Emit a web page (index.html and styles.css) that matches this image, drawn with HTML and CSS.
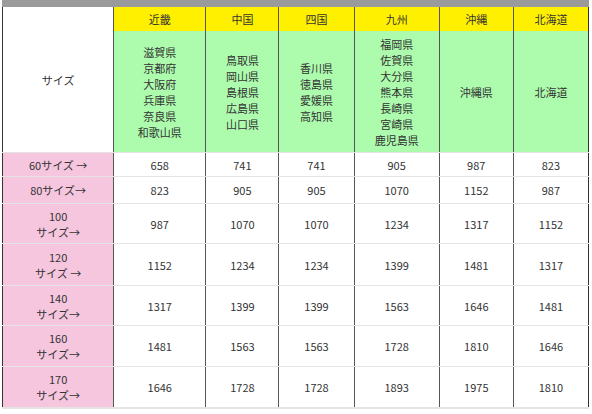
FILE: index.html
```html
<!DOCTYPE html>
<html lang="ja">
<head>
<meta charset="utf-8">
<link rel="stylesheet" href="styles.css">
</head>
<body>
<div class="wrap">
  <div class="topbar"></div>
  <table class="rates">
    <colgroup>
      <col class="c1"><col class="c2"><col class="c3"><col class="c4"><col class="c5"><col class="c6"><col class="c7">
    </colgroup>
    <tr class="head">
      <td class="size-head" rowspan="2">サイズ</td>
      <td class="area">近畿</td>
      <td class="area">中国</td>
      <td class="area">四国</td>
      <td class="area">九州</td>
      <td class="area">沖縄</td>
      <td class="area">北海道</td>
    </tr>
    <tr class="prefs">
      <td class="pref">滋賀県<br>京都府<br>大阪府<br>兵庫県<br>奈良県<br>和歌山県</td>
      <td class="pref">鳥取県<br>岡山県<br>島根県<br>広島県<br>山口県</td>
      <td class="pref">香川県<br>徳島県<br>愛媛県<br>高知県</td>
      <td class="pref">福岡県<br>佐賀県<br>大分県<br>熊本県<br>長崎県<br>宮崎県<br>鹿児島県</td>
      <td class="pref">沖縄県</td>
      <td class="pref">北海道</td>
    </tr>
    <tr class="r1">
      <td class="size">60サイズ →</td>
      <td>658</td><td>741</td><td>741</td><td>905</td><td>987</td><td>823</td>
    </tr>
    <tr class="r2">
      <td class="size">80サイズ→</td>
      <td>823</td><td>905</td><td>905</td><td>1070</td><td>1152</td><td>987</td>
    </tr>
    <tr class="r3">
      <td class="size">100<br>サイズ→</td>
      <td>987</td><td>1070</td><td>1070</td><td>1234</td><td>1317</td><td>1152</td>
    </tr>
    <tr class="r4">
      <td class="size">120<br>サイズ →</td>
      <td>1152</td><td>1234</td><td>1234</td><td>1399</td><td>1481</td><td>1317</td>
    </tr>
    <tr class="r5">
      <td class="size">140<br>サイズ→</td>
      <td>1317</td><td>1399</td><td>1399</td><td>1563</td><td>1646</td><td>1481</td>
    </tr>
    <tr class="r6">
      <td class="size">160<br>サイズ→</td>
      <td>1481</td><td>1563</td><td>1563</td><td>1728</td><td>1810</td><td>1646</td>
    </tr>
    <tr class="r7 last">
      <td class="size">170<br>サイズ→</td>
      <td>1646</td><td>1728</td><td>1728</td><td>1893</td><td>1975</td><td>1810</td>
    </tr>
  </table>
</div>
</body>
</html>
```

FILE: styles.css
```css
html, body {
  margin: 0;
  padding: 0;
  background: #ffffff;
}
body {
  font-family: "Noto Sans CJK JP", "Noto Sans", "DejaVu Sans", sans-serif;
  font-size: 11px;
  color: #333333;
}
.wrap {
  width: 587px;
  margin-left: 2px;
}
.topbar {
  height: 7px;
  background: #9a9a9a;
}
.rates {
  width: 587px;
  table-layout: fixed;
  border-collapse: collapse;
  border-left: 1px solid #333333;
  border-right: 1px solid #333333;
}
.c1 { width: 111px; }
.c2 { width: 92px; }
.c3 { width: 73px; }
.c4 { width: 75px; }
.c5 { width: 85px; }
.c6 { width: 74px; }
.c7 { width: 75px; }
.rates td {
  padding: 0;
  text-align: center;
  vertical-align: middle;
  line-height: 16px;
  border-right: 1px solid #555555;
  border-bottom: 1px solid #e4e4e4;
}
.rates td:last-child {
  border-right: none;
}
.head td.area {
  height: 24px;
  background: #fff000;
  border-bottom: none;
}
.size-head {
  background: #ffffff;
  border-bottom: none;
}
.pref {
  height: 121px;
  background: #adfcae;
  border-bottom: none;
}
.size {
  background: #f6c6de;
  border-bottom-color: #f6c6de;
}
.r1 td { height: 23px; }
.r2 td { height: 26px; }
.r3 td { height: 39px; }
.r4 td { height: 41px; }
.r5 td { height: 39px; }
.r6 td { height: 40px; }
.r7 td { height: 40px; }
.last td {
  border-bottom: 2px solid #e4e4e4;
}
```
